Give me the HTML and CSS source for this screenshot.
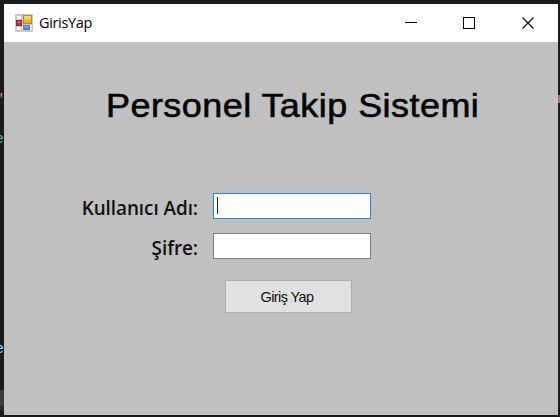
FILE: index.html
```
<!DOCTYPE html>
<html lang="tr">
<head>
<meta charset="utf-8">
<title>GirisYap</title>
<link rel="stylesheet" href="styles.css">
</head>
<body>
<span class="code quote">"</span>
<span class="code teal">e</span>
<span class="code blue">e</span>
<span class="scroll"></span>
<span class="mark"></span>
<main class="window">
  <header class="titlebar">
    <svg class="app-icon" width="18" height="18" viewBox="0 0 18 18">
      <defs>
        <linearGradient id="y" x2="0" y2="1"><stop stop-color="#ffe680"/><stop offset="1" stop-color="#dfa51c"/></linearGradient>
        <linearGradient id="b" x2="0" y2="1"><stop stop-color="#8ab8ff"/><stop offset="1" stop-color="#3c78d8"/></linearGradient>
      </defs>
      <rect width="18" height="18" rx="1" fill="#c9c9c9"/>
      <path d="M2 2h4v3H2zM2 13h4v3H2zM7 11h1v5H7zM15 11h1.500v5H15z" fill="#fff"/>
      <rect x="1.500" y="6.500" width="5" height="5" fill="#c53a32" stroke="#97211d"/>
      <path d="M3 8h2" stroke="#e6877c"/>
      <rect x="8.500" y="1.500" width="8" height="8" fill="url(#y)" stroke="#c18b13"/>
      <rect x="8.500" y="11.500" width="6" height="4" fill="url(#b)" stroke="#4b7fcc"/>
    </svg>
    <span class="caption">GirisYap</span>
    <svg class="controls" width="130" height="14" viewBox="0 0 130 14" fill="none" stroke="#000">
      <path d="M0 6.500h12"/>
      <rect x="58.500" y="1.500" width="11" height="11"/>
      <path d="M117.500 1.500l11 11M128.500 1.500l-11 11" stroke-width="1.100"/>
    </svg>
  </header>
  <h1>Personel Takip Sistemi</h1>
  <form class="login">
    <label for="user" class="user-label">Kullanıcı Adı:</label>
    <div class="field focused"><i class="caret"></i><input id="user" type="text"></div>
    <label for="pass" class="pass-label">Şifre:</label>
    <div class="field"><input id="pass" type="password"></div>
    <button type="button"><span>Giriş Yap</span></button>
  </form>
</main>
</body>
</html>
```
FILE: styles.css
```
* { box-sizing: border-box; }
body {
  margin: 0;
  padding: 4px 2px 2px 4px;
  height: 417px;
  background: #1b1a1c;
  overflow: hidden;
  position: relative;
}
.window {
  position: relative;
  height: 411px;
  background: #c0c0c0;
}
.titlebar {
  display: flex;
  align-items: center;
  height: 38px;
  padding: 0 23px 0 11px;
  background: #fff;
}
.app-icon { margin-right: 6px; }
.caption {
  font: 14.5px/20px "Open Sans", sans-serif;
  letter-spacing: -0.35px;
  color: #000;
}
.controls { margin-left: auto; }
h1 {
  margin: 44px 0 0 102px;
  font: 33px/40px "Liberation Sans", sans-serif;
  letter-spacing: 0.42px;
  transform: scaleX(1.09);
  transform-origin: 0 0;
  width: 400px;
  white-space: nowrap;
  color: #050505;
  -webkit-text-stroke: 0.6px #050505;
}
.login {
  display: grid;
  grid-template-columns: 194px 158px;
  grid-template-rows: 26px 26px 33px;
  column-gap: 15px;
  row-gap: 14px;
  padding-top: 67px;
}
label {
  justify-self: end;
  font: 600 18.9px/30px "Open Sans", sans-serif;
  letter-spacing: -0.05px;
  white-space: nowrap;
  color: #111;
}
.field {
  display: flex;
  align-items: center;
  background: #fff;
  border: 1px solid #7f7f7f;
}
.focused { border-color: #2587d9; }
.caret {
  width: 1px;
  height: 17px;
  margin: -2px 0 0 3px;
  background: #222;
}
input {
  flex: 1;
  min-width: 0;
  border: 0;
  padding: 0;
  outline: 0;
  background: transparent;
}
button {
  grid-column: 2;
  width: 127px;
  margin: 7px 0 -7px 12px;
  padding: 0 3px 0 0;
  background: #e1e1e1;
  border: 1px solid #adadad;
  border-radius: 0;
  color: #111;
  font: 14.5px/20px "Liberation Sans", sans-serif;
  letter-spacing: -0.6px;
}
.code {
  position: absolute;
  width: 4px;
  overflow: hidden;
  direction: rtl;
  font: 14px/16px "Liberation Mono", monospace;
}
.quote { left: 0; top: 92px; color: #ce9178; }
.teal { left: 0; top: 131px; color: #4ec9a0; }
.blue { left: 0; top: 341px; color: #9cdcfe; }
.scroll {
  position: absolute;
  left: 0;
  top: 390px;
  width: 4px;
  height: 21px;
  background: #3b3b3d;
  border-bottom: 5px solid #29292b;
}
.mark {
  position: absolute;
  right: 0;
  top: 95px;
  width: 2px;
  height: 8px;
  background: #a87661;
}
```
